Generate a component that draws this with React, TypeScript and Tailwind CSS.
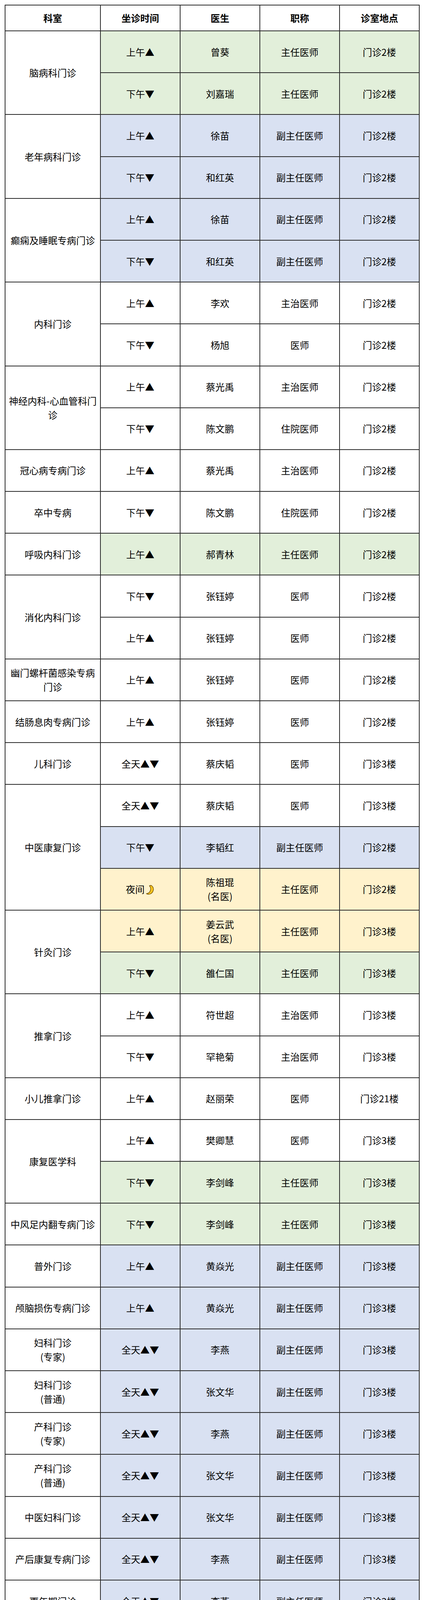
import React from "react";

type Tone = "w" | "g" | "b" | "y";

type Slot = {
  time: string;
  moon?: boolean;
  doctor: string;
  title: string;
  place: string;
  tone: Tone;
};

type Dept = {
  name: string;
  slots: Slot[];
};

const toneBg: Record<Tone, string> = {
  w: "bg-white",
  g: "bg-[#e2efda]",
  b: "bg-[#d9e1f2]",
  y: "bg-[#fff2cc]",
};

const AM = "上午▲";
const PM = "下午▼";
const ALL = "全天▲▼";

const depts: Dept[] = [
  {
    name: "脑病科门诊",
    slots: [
      { time: AM, doctor: "曾葵", title: "主任医师", place: "门诊2楼", tone: "g" },
      { time: PM, doctor: "刘嘉瑞", title: "主任医师", place: "门诊2楼", tone: "g" },
    ],
  },
  {
    name: "老年病科门诊",
    slots: [
      { time: AM, doctor: "徐苗", title: "副主任医师", place: "门诊2楼", tone: "b" },
      { time: PM, doctor: "和红英", title: "副主任医师", place: "门诊2楼", tone: "b" },
    ],
  },
  {
    name: "癫痫及睡眠专病门诊",
    slots: [
      { time: AM, doctor: "徐苗", title: "副主任医师", place: "门诊2楼", tone: "b" },
      { time: PM, doctor: "和红英", title: "副主任医师", place: "门诊2楼", tone: "b" },
    ],
  },
  {
    name: "内科门诊",
    slots: [
      { time: AM, doctor: "李欢", title: "主治医师", place: "门诊2楼", tone: "w" },
      { time: PM, doctor: "杨旭", title: "医师", place: "门诊2楼", tone: "w" },
    ],
  },
  {
    name: "神经内科-心血管科门诊",
    slots: [
      { time: AM, doctor: "蔡光禹", title: "主治医师", place: "门诊2楼", tone: "w" },
      { time: PM, doctor: "陈文鹏", title: "住院医师", place: "门诊2楼", tone: "w" },
    ],
  },
  {
    name: "冠心病专病门诊",
    slots: [{ time: AM, doctor: "蔡光禹", title: "主治医师", place: "门诊2楼", tone: "w" }],
  },
  {
    name: "卒中专病",
    slots: [{ time: PM, doctor: "陈文鹏", title: "住院医师", place: "门诊2楼", tone: "w" }],
  },
  {
    name: "呼吸内科门诊",
    slots: [{ time: AM, doctor: "郝青林", title: "主任医师", place: "门诊2楼", tone: "g" }],
  },
  {
    name: "消化内科门诊",
    slots: [
      { time: PM, doctor: "张钰婷", title: "医师", place: "门诊2楼", tone: "w" },
      { time: AM, doctor: "张钰婷", title: "医师", place: "门诊2楼", tone: "w" },
    ],
  },
  {
    name: "幽门螺杆菌感染专病门诊",
    slots: [{ time: AM, doctor: "张钰婷", title: "医师", place: "门诊2楼", tone: "w" }],
  },
  {
    name: "结肠息肉专病门诊",
    slots: [{ time: AM, doctor: "张钰婷", title: "医师", place: "门诊2楼", tone: "w" }],
  },
  {
    name: "儿科门诊",
    slots: [{ time: ALL, doctor: "蔡庆韬", title: "医师", place: "门诊3楼", tone: "w" }],
  },
  {
    name: "中医康复门诊",
    slots: [
      { time: ALL, doctor: "蔡庆韬", title: "医师", place: "门诊3楼", tone: "w" },
      { time: PM, doctor: "李韬红", title: "副主任医师", place: "门诊2楼", tone: "b" },
      { time: "夜间", moon: true, doctor: "陈祖琨\n(名医)", title: "主任医师", place: "门诊2楼", tone: "y" },
    ],
  },
  {
    name: "针灸门诊",
    slots: [
      { time: AM, doctor: "姜云武\n(名医)", title: "主任医师", place: "门诊3楼", tone: "y" },
      { time: PM, doctor: "雒仁国", title: "主任医师", place: "门诊3楼", tone: "g" },
    ],
  },
  {
    name: "推拿门诊",
    slots: [
      { time: AM, doctor: "符世超", title: "主治医师", place: "门诊3楼", tone: "w" },
      { time: PM, doctor: "罕艳菊", title: "主治医师", place: "门诊3楼", tone: "w" },
    ],
  },
  {
    name: "小儿推拿门诊",
    slots: [{ time: AM, doctor: "赵丽荣", title: "医师", place: "门诊21楼", tone: "w" }],
  },
  {
    name: "康复医学科",
    slots: [
      { time: AM, doctor: "樊卿慧", title: "医师", place: "门诊3楼", tone: "w" },
      { time: PM, doctor: "李剑峰", title: "主任医师", place: "门诊3楼", tone: "g" },
    ],
  },
  {
    name: "中风足内翻专病门诊",
    slots: [{ time: PM, doctor: "李剑峰", title: "主任医师", place: "门诊3楼", tone: "g" }],
  },
  {
    name: "普外门诊",
    slots: [{ time: AM, doctor: "黄焱光", title: "副主任医师", place: "门诊3楼", tone: "b" }],
  },
  {
    name: "颅脑损伤专病门诊",
    slots: [{ time: AM, doctor: "黄焱光", title: "副主任医师", place: "门诊3楼", tone: "b" }],
  },
  {
    name: "妇科门诊\n(专家)",
    slots: [{ time: ALL, doctor: "李燕", title: "副主任医师", place: "门诊3楼", tone: "b" }],
  },
  {
    name: "妇科门诊\n(普通)",
    slots: [{ time: ALL, doctor: "张文华", title: "副主任医师", place: "门诊3楼", tone: "b" }],
  },
  {
    name: "产科门诊\n(专家)",
    slots: [{ time: ALL, doctor: "李燕", title: "副主任医师", place: "门诊3楼", tone: "b" }],
  },
  {
    name: "产科门诊\n(普通)",
    slots: [{ time: ALL, doctor: "张文华", title: "副主任医师", place: "门诊3楼", tone: "b" }],
  },
  {
    name: "中医妇科门诊",
    slots: [{ time: ALL, doctor: "张文华", title: "副主任医师", place: "门诊3楼", tone: "b" }],
  },
  {
    name: "产后康复专病门诊",
    slots: [{ time: ALL, doctor: "李燕", title: "副主任医师", place: "门诊3楼", tone: "b" }],
  },
  {
    name: "更年期门诊",
    slots: [{ time: ALL, doctor: "李燕", title: "副主任医师", place: "门诊3楼", tone: "b" }],
  },
  {
    name: "耳鼻喉科",
    slots: [{ time: PM, doctor: "李璐璐", title: "主治医师", place: "门诊3楼", tone: "w" }],
  },
  {
    name: "眼科",
    slots: [{ time: PM, doctor: "杨静晖", title: "医师", place: "门诊3楼", tone: "w" }],
  },
  {
    name: "皮肤科",
    slots: [
      { time: "下午▼夜间", moon: true, doctor: "杨榆婷", title: "主治医师", place: "门诊3楼", tone: "w" },
      { time: ALL, doctor: "凡福青", title: "医师", place: "门诊3楼", tone: "w" },
    ],
  },
  {
    name: "口腔科门诊",
    slots: [
      { time: ALL, doctor: "浦丽仁", title: "主治医师", place: "门诊4楼", tone: "w" },
      { time: AM, doctor: "汤爱金", title: "主治医师", place: "门诊4楼", tone: "w" },
    ],
  },
  {
    name: "骨伤科·疼痛科",
    slots: [
      { time: AM, doctor: "刘进绕", title: "副主任医师", place: "门诊3楼", tone: "b" },
      { time: PM, doctor: "白捷", title: "副主任医师", place: "门诊3楼", tone: "b" },
    ],
  },
  {
    name: "骨质疏松专病门诊",
    slots: [{ time: AM, doctor: "刘进绕", title: "副主任医师", place: "门诊3楼", tone: "b" }],
  },
  {
    name: "治未病中医科门诊",
    slots: [{ time: PM, doctor: "张妙兴", title: "副主任医师", place: "门诊2楼", tone: "b" }],
  },
  {
    name: "体重管理门诊",
    slots: [{ time: PM, doctor: "张妙兴", title: "副主任医师", place: "门诊2楼", tone: "b" }],
  },
  {
    name: "药物咨询门诊",
    slots: [{ time: PM, doctor: "毛志军", title: "副主任药师", place: "门诊2楼", tone: "b" }],
  },
];

// crescent moon, stands in for the 🌙 emoji
function Moon() {
  return (
    <svg viewBox="0 0 24 28" className="ml-[2px] inline-block h-[28px] w-[24px] align-[-6px]">
      <path
        d="M15 2.5c4.5 3 6.5 8 5.3 13.2C19 21.3 14 25.5 8.2 25.5c-2.2 0-4.2-.6-5.7-1.7 4.4-.3 8.5-3.3 10.1-7.7 1.5-4.3.7-9.2-2.3-12.6 1.6-.6 3.3-1 4.7-1z"
        fill="#f9c31f"
        stroke="#6b4b00"
        strokeWidth="1.4"
        strokeLinejoin="round"
      />
    </svg>
  );
}

const cell = "border-2 border-[#2a2a2a] px-2 text-center align-middle";

export default function App() {
  return (
    <div
      className="min-h-[5450px] bg-white pl-[12px] pt-[12px] text-[24px] leading-[36px] text-black"
      style={{ fontFamily: '"Noto Sans CJK SC", "Noto Sans", sans-serif' }}
    >
      <table className="w-[1060px] table-fixed border-collapse">
        <colgroup>
          <col className="w-[244px]" />
          <col className="w-[204px]" />
          <col className="w-[204px]" />
          <col className="w-[204px]" />
          <col className="w-[204px]" />
        </colgroup>
        <thead>
          <tr className="h-[66px]">
            {["科室", "坐诊时间", "医生", "职称", "诊室地点"].map((h) => (
              <th key={h} className={`${cell} bg-white font-bold`}>
                {h}
              </th>
            ))}
          </tr>
        </thead>
        <tbody>
          {depts.map((d) =>
            d.slots.map((s, i) => (
              <tr key={d.name + i} className="h-[107.2px]">
                {i === 0 && (
                  <td rowSpan={d.slots.length} className={`${cell} whitespace-pre-line bg-white`}>
                    {d.name}
                  </td>
                )}
                <td className={`${cell} ${toneBg[s.tone]} whitespace-nowrap`}>
                  {s.time}
                  {s.moon && <Moon />}
                </td>
                <td className={`${cell} ${toneBg[s.tone]} whitespace-pre-line`}>{s.doctor}</td>
                <td className={`${cell} ${toneBg[s.tone]}`}>{s.title}</td>
                <td className={`${cell} ${toneBg[s.tone]}`}>{s.place}</td>
              </tr>
            ))
          )}
        </tbody>
      </table>
    </div>
  );
}
